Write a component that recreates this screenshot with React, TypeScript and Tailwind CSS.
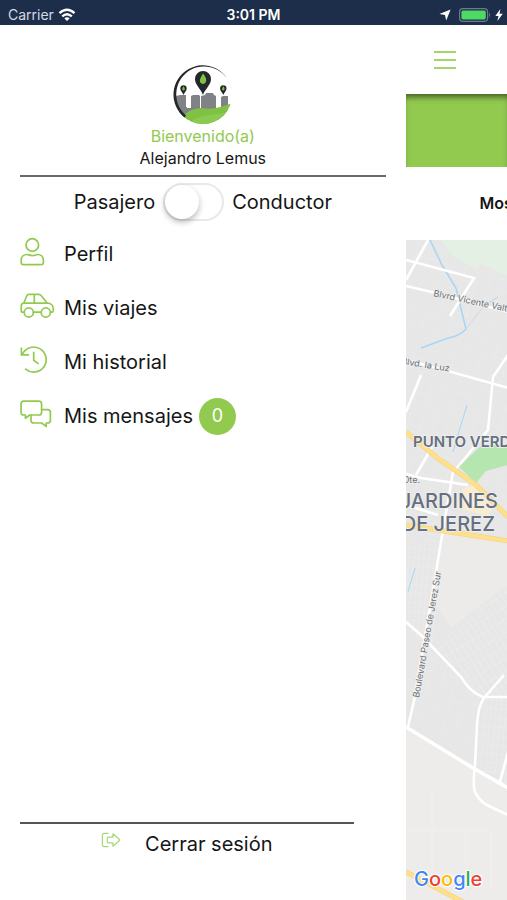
import React, { useState } from "react";

type IconProps = { className?: string };

const iconBase = {
  fill: "none",
  stroke: "currentColor",
  strokeLinecap: "round" as const,
  strokeLinejoin: "round" as const,
  "aria-hidden": true,
};

function UserIcon({ className }: IconProps) {
  return (
    <svg viewBox="0 0 36 30" strokeWidth="1.7" className={className} {...iconBase}>
      <circle cx="12.3" cy="8" r="6.3" />
      <path d="M7 17.5C8.5 17.5 9.5 18.6 12.3 18.6S16 17.5 17.6 17.5C21 17.5 23.4 20 23.4 23.2V25.5Q23.4 27.6 21.3 27.6H3.3Q1.2 27.6 1.2 25.5V23.2C1.2 20 3.6 17.5 7 17.5Z" />
    </svg>
  );
}

function CarIcon({ className }: IconProps) {
  return (
    <svg viewBox="0 0 36 30" strokeWidth="1.7" className={className} {...iconBase}>
      <circle cx="8.8" cy="21.5" r="4.6" />
      <circle cx="25.8" cy="21.5" r="4.6" />
      <path d="M4.2 21.2H2.6Q1.2 21.2 1.2 19.8V15.2Q1.2 12.2 4 12.2H27.5C31 12.2 33.3 14.5 33.3 17.8V19.8Q33.3 21.2 31.9 21.2H30.4M13.4 21.2H21.2" />
      <path d="M3.8 12.2L6.6 5.2Q7.3 3.4 9.2 3.4H18.6Q20.2 3.4 21.3 4.7L27.3 12.2M14.3 3.4V12.2" />
    </svg>
  );
}

function HistoryIcon({ className }: IconProps) {
  return (
    <svg viewBox="0 0 36 30" strokeWidth="1.7" className={className} {...iconBase}>
      <path d="M2.2 9.6A12.5 12.5 0 1 1 5.6 24.1" />
      <path d="M1.4 3V9.9H8.4M13.7 7.4V15.2L18.2 18.6" />
    </svg>
  );
}

function MessagesIcon({ className }: IconProps) {
  return (
    <svg viewBox="0 0 36 30" strokeWidth="1.7" className={className} {...iconBase}>
      <path d="M3.8 2.2H18.8Q21.6 2.2 21.6 5V13.2Q21.6 16 18.8 16H9.8L5.4 19.2V16H3.8Q1 16 1 13.2V5Q1 2.2 3.8 2.2Z" />
      <path d="M21.6 10.6H27.6Q30.4 10.6 30.4 13.4V21.2Q30.4 24 27.6 24H26.2V27.4L21.6 24H13.8Q11 24 11 21.2V16" />
    </svg>
  );
}

function LogoutIcon({ className }: IconProps) {
  return (
    <svg viewBox="0 0 20 16" strokeWidth="1.2" className={className} {...iconBase}>
      <path d="M7 1.4H3Q1.4 1.4 1.4 3V13Q1.4 14.6 3 14.6H7" />
      <path d="M12 1.8L18.2 7.2Q18.9 8 18.2 8.8L12 14.2V10.8H7.2Q6.2 10.8 6.2 9.8V6.2Q6.2 5.2 7.2 5.2H12Z" />
    </svg>
  );
}

function Pin({ x, y, scale }: { x: number; y: number; scale: number }) {
  return (
    <g transform={`translate(${x} ${y}) scale(${scale})`}>
      <path d="M0 16C-2 10-8 6-8 0A8 8 0 0 1 8 0C8 6 2 10 0 16Z" fill="#25282b" />
      <path d="M0-5.5C3-2 4 1 2.6 3.4Q1.8 4.8 0 5Q-1.8 4.8-2.6 3.4C-4 1-2-2 0-5.5Z" fill="#7fc241" />
    </g>
  );
}

function Logo() {
  return (
    <svg viewBox="0 0 60 60" className="size-15" aria-hidden>
      <defs>
        <clipPath id="logo-disc">
          <circle cx="30" cy="30" r="29" />
        </clipPath>
      </defs>
      <g clipPath="url(#logo-disc)">
        <path
          d="M3 31L7 30H13V42H14V43H18V31L20 30H26L27 31V43H28V31L32 30L33 28H40L41 30L43 31V43H48V32L50 31H55V55H12L3 40Z"
          fill="#808285"
        />
        <path d="M10 52C15 45 23 42.5 32 43.5C42 44.5 50 41.5 60 38V60H14Z" fill="#7fc143" />
        <path d="M17 57C29 48 44 51 57 46V60H15Z" fill="#8aca50" />
      </g>
      <path
        d="M11.5 52.5A29.3 29.3 0 1 1 58.8 25.5A27.9 27.9 0 1 0 13 50.5Z"
        fill="#25282b"
      />
      <Pin x={30} y={14} scale={1} />
      <Pin x={10.5} y={23.5} scale={0.4} />
      <Pin x={50.3} y={23.5} scale={0.4} />
    </svg>
  );
}

function StatusBar() {
  return (
    <header className="grid h-[25px] shrink-0 grid-cols-3 items-center bg-[#1c2e4a] px-2 text-[13px] leading-5 text-white">
      <div className="flex items-center gap-2 pt-1">
        <span className="text-sm leading-5 text-[#d5dbe4]">Carrier</span>
        <svg viewBox="0 0 18 14" className="-ml-1 h-[14px] w-[18px]" fill="none" stroke="white" strokeWidth="2.4" aria-hidden>
          <path d="M1.5 5.2Q9-1.6 16.5 5.2M4.2 8.3Q9 4 13.8 8.3" />
          <path d="M6.3 10.3Q9 8.2 11.7 10.3L9 13Z" fill="white" stroke="none" />
        </svg>
      </div>
      <time className="pt-1 text-center text-sm leading-5 font-semibold">3:01 PM</time>
      <div className="flex items-center justify-end gap-1 pt-1">
        <svg viewBox="0 0 12 12" className="mr-1 size-3" fill="white" aria-hidden>
          <path d="M11.6.4L7.2 11.4L6 6L.4 5Z" />
        </svg>
        <svg viewBox="0 0 32 14" className="h-[14px] w-8" aria-hidden>
          <rect x=".6" y=".6" width="28" height="12.8" rx="3.5" fill="none" stroke="#6d7b8e" strokeWidth="1.2" />
          <rect x="2.4" y="2.4" width="24.4" height="9.2" rx="1.8" fill="#4cd964" />
          <path d="M30 4.5Q32 7 30 9.5Z" fill="#6d7b8e" />
        </svg>
        <svg viewBox="0 0 8 12" className="-mr-1 h-3 w-2" fill="white" aria-hidden>
          <path d="M5.4 0L.3 7H3.5L2.4 12L7.8 4.8H4.5Z" />
        </svg>
      </div>
    </header>
  );
}

const streets = [
  "M22 0L0 40",
  "M0 20L68 38L44 76",
  "M0 46L30 53L102 72",
  "M0 120L42 131L102 148",
  "M15 135L0 172",
  "M102 115L87 137L82 190L60 217L47 232L37 290L30 332L8 461L2 487",
  "M26 207L10 235",
  "M0 234L15 238L62 245",
  "M0 265L32 275",
  "M0 382L15 395L55 437Q65 453 77 457H102",
  "M98 435L78 458Q72 466 71 485L69 525Q66 548 70 554Q75 563 85 567L102 575",
  "M102 512L94 542",
];

const Halo = (props: React.SVGProps<SVGTextElement>) => (
  <text stroke="#efefef" strokeWidth="1.5" paintOrder="stroke" {...props} />
);

function CityMap() {
  return (
    <svg
      viewBox="0 0 102 660"
      preserveAspectRatio="xMinYMin slice"
      className="min-h-[660px] w-full flex-1 font-['Inter',sans-serif]"
      role="img"
      aria-label="Mapa"
    >
      <defs>
        <pattern id="blocks" width="13" height="11" patternUnits="userSpaceOnUse" patternTransform="rotate(16)">
          <path d="M0 0H13M0 0V11" stroke="#ececec" strokeWidth="1" />
        </pattern>
        <pattern id="diagonal" width="6" height="11" patternUnits="userSpaceOnUse" patternTransform="rotate(-32)">
          <path d="M0 0H6M0 0V11" stroke="#efefef" strokeWidth="1" />
        </pattern>
        <pattern id="dense" width="5" height="9" patternUnits="userSpaceOnUse" patternTransform="rotate(5)">
          <path d="M0 0H5M0 0V9" stroke="#eeeeee" strokeWidth="1" />
        </pattern>
      </defs>
      <rect width="102" height="660" fill="#e7e7e7" />
      <rect width="102" height="300" fill="url(#blocks)" />
      <path d="M0 300H38L25 420L0 382Z" fill="url(#dense)" />
      <path d="M30 405L102 345V457H77L55 437Z" fill="url(#diagonal)" />
      <path d="M4 480L15 400L52 437L75 462L69 525Z" fill="url(#blocks)" />
      <path d="M77 458H102V545L70 527Z" fill="url(#dense)" />
      <path d="M34 0H102V36L75 24L70 30L48 16Z" fill="#e5f0e4" />
      <path d="M37 293L102 303V345L45 388L28 362Z" fill="#ecebea" />
      <path d="M0 487L67 528L102 548V660H0Z" fill="#edecea" />
      <path d="M26 548V640M0 590H85V650M60 590V640" fill="none" stroke="#f0f0ed" strokeWidth="1" />
      <path d="M63 217L76 205H102V225L80 231L70 243L53 227Z" fill="#b5e6b0" />
      <path d="M56 249L70 244L88 262L82 276L50 268Z" fill="#faeccf" />

      <g fill="none" stroke="#a9d6f5" strokeWidth="1.6">
        <path d="M24 0L36 25L50 48L60 89Q54 96 42 98L15 108" />
        <path d="M78 66L92 57M61 165L47 212M9 328L2 352" strokeWidth="1" />
      </g>
      <path d="M60 89L78 66" stroke="#d2d7da" strokeWidth="1" />

      <g fill="none" stroke="#fff" strokeWidth="2.6">
        {streets.map((d) => (
          <path key={d} d={d} />
        ))}
        <path d="M0 487L67 528L102 548" strokeWidth="3.6" />
      </g>

      <g fill="none">
        <g stroke="#f2d279" strokeWidth="5">
          <path d="M0 192L30 217L70 245L102 277M0 285L38 291L102 301M0 632L57 662" />
        </g>
        <g stroke="#fee08c" strokeWidth="4">
          <path d="M0 192L30 217L70 245L102 277M0 285L38 291L102 301M0 632L57 662" />
        </g>
      </g>

      <g fill="#6b6f73" fontSize="9">
        <Halo transform="translate(27 56) rotate(12)">Blvrd Vicente Valt</Halo>
        <Halo transform="translate(-5 124) rotate(9)">Blvd. la Luz</Halo>
        <Halo x="14" y="243" textAnchor="end">
          Ote.
        </Halo>
        <Halo transform="translate(13 458) rotate(-80)">
          Boulevard Paseo de Jerez Sur
        </Halo>
      </g>
      <g fill="#66707f" fontWeight="600">
        <Halo x="7" y="207" fontSize="15">
          PUNTO VERD
        </Halo>
        <g fontSize="20" fontWeight="500" textAnchor="end">
          <Halo x="92" y="268">JARDINES</Halo>
          <Halo x="89" y="291">DE JEREZ</Halo>
        </g>
      </g>

      <text x="8" y="646" fontSize="20" fontWeight="500" stroke="#fff" strokeWidth="2" paintOrder="stroke">
        <tspan fill="#4285f4">G</tspan>
        <tspan fill="#ea4335">o</tspan>
        <tspan fill="#fbbc05">o</tspan>
        <tspan fill="#4285f4">g</tspan>
        <tspan fill="#34a853">l</tspan>
        <tspan fill="#ea4335">e</tspan>
      </text>
    </svg>
  );
}

const menu = [
  { label: "Perfil", icon: UserIcon },
  { label: "Mis viajes", icon: CarIcon },
  { label: "Mi historial", icon: HistoryIcon },
  { label: "Mis mensajes", icon: MessagesIcon, badge: 0 },
];

function Drawer() {
  const [driver, setDriver] = useState(false);

  return (
    <aside className="flex w-4/5 shrink-0 flex-col bg-white px-5 pt-10">
      <div className="flex flex-col items-center border-b-2 border-[#6a6a6a] pb-1.5 text-base leading-[22px]">
        <Logo />
        <span className="text-[#92ca50]">Bienvenido(a)</span>
        <span>Alejandro Lemus</span>
      </div>

      <div className="flex items-center justify-center gap-2 pt-1.5 text-xl leading-9">
        <label htmlFor="mode">Pasajero</label>
        <input
          id="mode"
          type="checkbox"
          role="switch"
          checked={driver}
          onChange={(e) => setDriver(e.target.checked)}
          className="h-[38px] w-[61px] cursor-pointer appearance-none rounded-full border-2 border-[#e9e9e9] bg-white before:block before:size-[34px] before:rounded-full before:bg-white before:shadow-[0_3px_6px_rgba(0,0,0,0.28)] before:content-[''] checked:bg-[#92ca50] checked:before:ml-6"
        />
        <label htmlFor="mode">Conductor</label>
      </div>

      <nav className="pt-1.5">
        <ul>
          {menu.map(({ label, icon: Icon, badge }) => (
            <li key={label}>
              <a href="#" className="flex h-[54px] items-center text-xl">
                <Icon className="mr-2 mb-1 h-[30px] w-9 text-[#92ca50]" />
                {label}
                {badge !== undefined && (
                  <span className="ml-1.5 flex size-[37px] items-center justify-center rounded-full bg-[#92ca50] text-lg text-white">
                    {badge}
                  </span>
                )}
              </a>
            </li>
          ))}
        </ul>
      </nav>

      <div className="mt-auto mr-8 border-t-2 border-[#555] pt-1.5 pb-[42px]">
        <button type="button" className="mx-auto flex cursor-pointer items-start gap-6 text-xl leading-7">
          <LogoutIcon className="mt-0.5 h-4 w-5 text-[#a9d677]" />
          Cerrar sesión
        </button>
      </div>
    </aside>
  );
}

export default function App() {
  return (
    <div className="flex min-h-screen flex-col overflow-hidden bg-white font-['Inter',sans-serif] text-[#161616]">
      <StatusBar />
      <div className="flex flex-1">
        <Drawer />
        <main className="flex min-w-0 flex-1 flex-col overflow-hidden">
          <div className="flex h-[69px] items-center px-7">
            <button type="button" aria-label="Menú" className="flex cursor-pointer flex-col gap-1.5">
              <span className="h-0.5 w-[22px] bg-[#a5d46c]" />
              <span className="h-0.5 w-[22px] bg-[#a5d46c]" />
              <span className="h-0.5 w-[22px] bg-[#a5d46c]" />
            </button>
          </div>
          <div className="h-[73px] bg-[#92ca50] shadow-[inset_0_6px_6px_-3px_rgba(0,0,0,0.55)]" />
          <h2 className="h-[73px] pl-[74px] text-base leading-[73px] font-semibold whitespace-nowrap">
            Mos
          </h2>
          <CityMap />
        </main>
      </div>
    </div>
  );
}
